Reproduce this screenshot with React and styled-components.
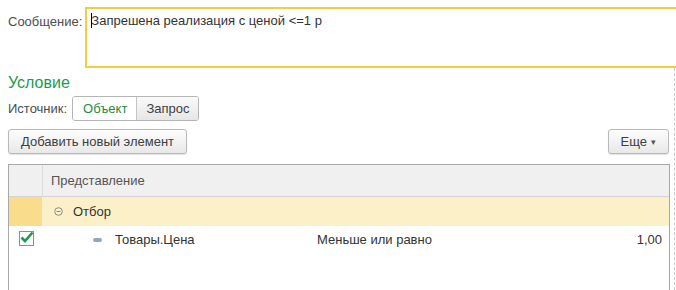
import React from "react";
import styled, { createGlobalStyle } from "styled-components";

const GlobalStyle = createGlobalStyle`
  body {
    margin: 0;
    background: #fff;
    font-family: "Liberation Sans", Arial, sans-serif;
    font-size: 13px;
    color: #4d4d4d;
  }
`;

export default function App() {
  return (
    <Page>
      <GlobalStyle />
      <MessageRow>
        <FieldLabel>Сообщение:</FieldLabel>
        <MessageBox>
          <Caret />
          Запрешена реализация с ценой &lt;=1 р
        </MessageBox>
      </MessageRow>
      <Body>
        <SectionTitle>Условие</SectionTitle>
        <SourceRow>
          <FieldLabel>Источник:</FieldLabel>
          <Toggle>
            <ToggleButton active>Объект</ToggleButton>
            <ToggleButton>Запрос</ToggleButton>
          </Toggle>
        </SourceRow>
        <Toolbar>
          <Button>Добавить новый элемент</Button>
          <Button>
            Еще <Arrow>▾</Arrow>
          </Button>
        </Toolbar>
        <Table>
          <HeaderRow>
            <MarkCell />
            <HeaderCell>Представление</HeaderCell>
          </HeaderRow>
          <GroupRow>
            <MarkCell group />
            <GroupCell>
              <CollapseIcon>
                <svg width="9" height="9" viewBox="0 0 9 9">
                  <circle cx="4.5" cy="4.5" r="3.8" fill="none" stroke="#8a8a8a" strokeWidth="1" />
                  <path d="M2.5 4.5 H6.5" stroke="#8a8a8a" strokeWidth="1" />
                </svg>
              </CollapseIcon>
              Отбор
            </GroupCell>
          </GroupRow>
          <ItemRow>
            <MarkCell>
              <CheckBox>
                <svg width="14" height="12" viewBox="0 0 14 12">
                  <path
                    d="M1.5 6.5 L5 10 L12.5 1.5"
                    fill="none"
                    stroke="#1a9a4a"
                    strokeWidth="2.6"
                  />
                </svg>
              </CheckBox>
            </MarkCell>
            <ItemName>
              <FieldIcon />
              Товары.Цена
            </ItemName>
            <ItemOp>Меньше или равно</ItemOp>
            <ItemValue>1,00</ItemValue>
          </ItemRow>
        </Table>
      </Body>
    </Page>
  );
}

const Page = styled.div`
  width: 676px;
  height: 290px;
  overflow: hidden;
  padding-top: 7px;
  box-sizing: border-box;
`;

const MessageRow = styled.div`
  display: flex;
  align-items: flex-start;
  padding-left: 8px;
  gap: 3px;
`;

const FieldLabel = styled.span`
  color: #4d4d4d;
  font-size: 13px;
  padding-top: 7px;
  white-space: nowrap;
`;

const MessageBox = styled.div`
  flex: 1;
  height: 53px;
  margin-right: -10px;
  border: 2px solid #f0cf3c;
  border-right: none;
  padding: 4px 0 0 4px;
  color: #333;
  font-size: 13px;
  display: flex;
  align-items: flex-start;
`;

const Caret = styled.span`
  display: inline-block;
  width: 1px;
  height: 15px;
  background: #000;
  margin-right: -1px;
`;

const Body = styled.div`
  margin-right: 1px;
  padding: 5px 4px 0 8px;
  border-right: 1px dashed #c8c8c8;
`;

const SectionTitle = styled.div`
  color: #1f9a4d;
  font-size: 16px;
  line-height: 20px;
`;

const SourceRow = styled.div`
  display: flex;
  align-items: center;
  gap: 5px;
  margin-top: 3px;

  ${FieldLabel} {
    padding-top: 0;
  }
`;

const Toggle = styled.div`
  display: flex;
  border: 1px solid #b5b5b5;
  border-radius: 3px;
  overflow: hidden;
  height: 23px;
`;

const ToggleButton = styled.div`
  display: flex;
  align-items: center;
  padding: 0 9px 0 ${(p) => (p.active ? "10px" : "9px")};
  font-size: 13px;
  color: ${(p) => (p.active ? "#1f8a45" : "#404040")};
  background: ${(p) =>
    p.active ? "#fff" : "linear-gradient(#fafafa, #e6e6e6)"};
  border-left: ${(p) => (p.active ? "none" : "1px solid #c4c4c4")};
`;

const Toolbar = styled.div`
  display: flex;
  justify-content: space-between;
  margin-top: 8px;
  padding-right: 1px;
`;

const Button = styled.div`
  display: flex;
  align-items: center;
  height: 23px;
  padding: 0 12px;
  border: 1px solid #b9b9b9;
  border-radius: 3px;
  background: linear-gradient(#fdfdfd, #e8e8e8);
  color: #404040;
  font-size: 13px;
  box-shadow: 0 1px 1px rgba(0, 0, 0, 0.12);
`;

const Arrow = styled.span`
  font-size: 9px;
  margin-left: 4px;
  color: #555;
`;

const Table = styled.div`
  margin-top: 10px;
  border: 1px solid #a9a9a9;
  border-bottom: none;
  height: 140px;
`;

const Row = styled.div`
  display: flex;
  align-items: stretch;
`;

const HeaderRow = styled(Row)`
  height: 31px;
  background: #f0f0f0;
  border-bottom: 1px solid #d4d4d4;
`;

const GroupRow = styled(Row)`
  height: 29px;
  background: #fcf0c8;
`;

const ItemRow = styled(Row)`
  height: 29px;
`;

const MarkCell = styled.div`
  width: 33px;
  flex: none;
  display: flex;
  align-items: center;
  justify-content: center;
  background: ${(p) => (p.group ? "#f9dd8c" : "transparent")};
  border-right: ${(p) => (p.group ? "none" : "1px solid transparent")};

  ${HeaderRow} & {
    border-right: 1px solid #dcdcdc;
  }
`;

const Cell = styled.div`
  display: flex;
  align-items: center;
  padding-left: 10px;
  color: #333;
  font-size: 13px;
`;

const HeaderCell = styled(Cell)`
  color: #555;
  padding-left: 8px;
`;

const GroupCell = styled(Cell)`
  padding-left: 12px;
`;

const CollapseIcon = styled.span`
  display: flex;
  margin-right: 10px;
`;

const CheckBox = styled.div`
  width: 13px;
  height: 13px;
  border: 1px solid #8e8e8e;
  background: #fff;
  position: relative;
  margin-top: -5px;
  margin-left: 1px;

  svg {
    position: absolute;
    left: 0;
    top: -1px;
  }
`;

const ItemName = styled(Cell)`
  width: 274px;
  padding-left: 50px;
  box-sizing: border-box;
  align-items: flex-start;
  padding-top: 6px;
`;

const FieldIcon = styled.span`
  display: inline-block;
  width: 9px;
  height: 4px;
  border-radius: 2px;
  background: #8ea8c4;
  margin: 6px 13px 0 0;
`;

const ItemOp = styled(Cell)`
  padding-left: 0;
  align-items: flex-start;
  padding-top: 6px;
  flex: 1;
`;

const ItemValue = styled(Cell)`
  align-items: flex-start;
  padding-top: 6px;
  padding-right: 7px;
`;
